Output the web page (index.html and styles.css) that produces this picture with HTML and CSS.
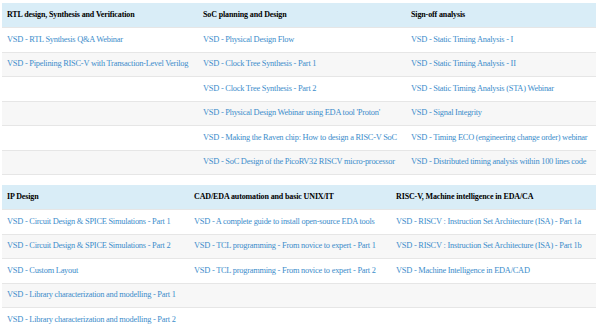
FILE: index.html
```html
<!DOCTYPE html>
<html>
<head>
<meta charset="utf-8">
<link rel="stylesheet" href="styles.css">
</head>
<body>
<table class="grid grid-a">
  <colgroup><col class="a1"><col class="a2"><col class="a3"></colgroup>
  <thead>
    <tr><th>RTL design, Synthesis and Verification</th><th>SoC planning and Design</th><th>Sign-off analysis</th></tr>
  </thead>
  <tbody>
    <tr><td><a href="#">VSD - RTL Synthesis Q&amp;A Webinar</a></td><td><a href="#">VSD - Physical Design Flow</a></td><td><a href="#">VSD - Static Timing Analysis - I</a></td></tr>
    <tr><td><a href="#">VSD - Pipelining RISC-V with Transaction-Level Verilog</a></td><td><a href="#">VSD - Clock Tree Synthesis - Part 1</a></td><td><a href="#">VSD - Static Timing Analysis - II</a></td></tr>
    <tr><td></td><td><a href="#">VSD - Clock Tree Synthesis - Part 2</a></td><td><a href="#">VSD - Static Timing Analysis (STA) Webinar</a></td></tr>
    <tr><td></td><td><a href="#">VSD - Physical Design Webinar using EDA tool 'Proton'</a></td><td><a href="#">VSD - Signal Integrity</a></td></tr>
    <tr><td></td><td><a href="#">VSD - Making the Raven chip: How to design a RISC-V SoC</a></td><td><a href="#">VSD - Timing ECO (engineering change order) webinar</a></td></tr>
    <tr><td></td><td><a href="#">VSD - SoC Design of the PicoRV32 RISCV micro-processor</a></td><td><a href="#">VSD - Distributed timing analysis within 100 lines code</a></td></tr>
  </tbody>
</table>
<table class="grid grid-b">
  <colgroup><col class="b1"><col class="b2"><col class="b3"></colgroup>
  <thead>
    <tr><th>IP Design</th><th>CAD/EDA automation and basic UNIX/IT</th><th>RISC-V, Machine intelligence in EDA/CA</th></tr>
  </thead>
  <tbody>
    <tr><td><a href="#">VSD - Circuit Design &amp; SPICE Simulations - Part 1</a></td><td><a href="#">VSD - A complete guide to install open-source EDA tools</a></td><td><a href="#">VSD - RISCV : Instruction Set Architecture (ISA) - Part 1a</a></td></tr>
    <tr><td><a href="#">VSD - Circuit Design &amp; SPICE Simulations - Part 2</a></td><td><a href="#">VSD - TCL programming - From novice to expert - Part 1</a></td><td><a href="#">VSD - RISCV : Instruction Set Architecture (ISA) - Part 1b</a></td></tr>
    <tr><td><a href="#">VSD - Custom Layout</a></td><td><a href="#">VSD - TCL programming - From novice to expert - Part 2</a></td><td><a href="#">VSD - Machine Intelligence in EDA/CAD</a></td></tr>
    <tr><td><a href="#">VSD - Library characterization and modelling - Part 1</a></td><td></td><td></td></tr>
    <tr><td><a href="#">VSD - Library characterization and modelling - Part 2</a></td><td></td><td></td></tr>
  </tbody>
</table>
</body>
</html>
```
FILE: styles.css
```css
html, body {
  margin: 0;
  padding: 0;
  background: #ffffff;
}
body {
  padding: 3px 4px 0 2px;
  font-family: "Liberation Serif", "Times New Roman", serif;
  font-size: 8.4px;
  letter-spacing: -0.24px;
  color: #333333;
}
.grid {
  width: 594px;
  border-collapse: collapse;
  border-spacing: 0;
  table-layout: fixed;
}
.grid-b {
  margin-top: 10px;
}
.grid th,
.grid td {
  text-align: left;
  vertical-align: middle;
  height: 24.5px;
  padding: 0 5px;
  box-sizing: border-box;
  line-height: 12px;
  white-space: nowrap;
  overflow: hidden;
}
.grid th {
  background: #d9edf7;
  font-weight: bold;
  font-size: 8px;
  letter-spacing: -0.13px;
  color: #000000;
}
.grid td {
  border-top: 1px solid #e6e6e6;
}
.grid tbody tr:last-child td {
  border-bottom: 1px solid #e6e6e6;
}
.grid tbody tr:nth-child(even) td {
  background: #f7f7f7;
}
.grid a {
  color: #3c8dcb;
  text-decoration: none;
}
.a1 { width: 196px; }
.a2 { width: 208px; }
.a3 { width: 190px; }
.b1 { width: 187px; }
.b2 { width: 202px; }
.b3 { width: 205px; }
```
